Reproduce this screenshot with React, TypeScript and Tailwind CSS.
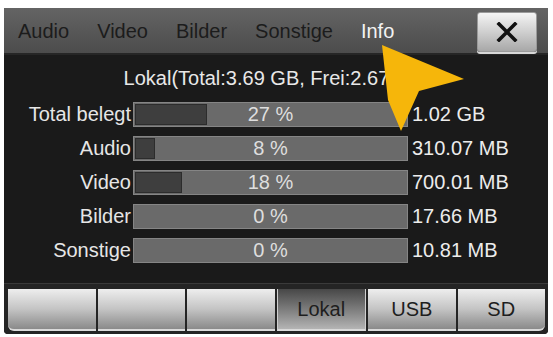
import React from 'react';

const tabs = ['Audio', 'Video', 'Bilder', 'Sonstige', 'Info'];

const rows = [
  { label: 'Total belegt', pct: 27, value: '1.02 GB' },
  { label: 'Audio', pct: 8, value: '310.07 MB' },
  { label: 'Video', pct: 18, value: '700.01 MB' },
  { label: 'Bilder', pct: 0, value: '17.66 MB' },
  { label: 'Sonstige', pct: 0, value: '10.81 MB' },
];

const sources = ['', '', '', 'Lokal', 'USB', 'SD'];

const App: React.FC = () => {
  return (
    <div className="relative w-[553px] h-[337px] bg-white pt-[8px] pl-[4px] font-['Liberation_Sans',Arial,sans-serif] text-[20px] leading-[23px]">
      <div className="w-[544px] h-[326px] bg-[#1a1a1a] flex flex-col rounded-b-[4px] overflow-hidden">
        {/* tab bar */}
        <div className="h-[47px] flex items-center justify-between pl-[14px] pr-[11px] bg-gradient-to-b from-[#646464] to-[#4c4c4c] border-b-2 border-[#262626]">
          <div className="flex items-center gap-[28px] pt-[2px]">
            {tabs.map((t) => (
              <span key={t} className={t === 'Info' ? 'text-[#f2f2f2]' : 'text-[#1c1c1c]'}>
                {t}
              </span>
            ))}
          </div>
          <button className="w-[60px] h-[40px] mt-[2px] rounded-[3px] border border-[#9a9a9a] bg-gradient-to-b from-[#f4f4f4] via-[#cfcfcf] to-[#a8a8a8] flex items-center justify-center shadow-[0_2px_0_#d8d8d8]">
            <svg width="22" height="20" viewBox="0 0 22 20">
              <path d="M3 2 L19 18 M19 2 L3 18" stroke="#111" strokeWidth="3.6" strokeLinecap="square" />
            </svg>
          </button>
        </div>

        {/* storage info */}
        <div className="h-[228px] flex flex-col pt-[12px]">
          <div className="text-center text-[#e8e8e8] pl-[2px]">Lokal(Total:3.69 GB, Frei:2.67 GB)</div>
          <div className="flex flex-col gap-[9px] mt-[12px]">
            {rows.map((r) => (
              <div key={r.label} className="flex items-center h-[25px]">
                <div className="w-[127px] text-right text-[#e6e6e6]">{r.label}</div>
                <div className="relative ml-[2px] w-[275px] h-[25px] bg-[#6a6a6a] border border-[#858585]">
                  {r.pct > 0 && (
                    <div
                      className="absolute left-[1px] top-[1px] bottom-[1px] bg-[#3e3e3e] border border-[#2c2c2c]"
                      style={{ width: `${(r.pct / 100) * 273 - 2}px` }}
                    />
                  )}
                  <div className="absolute inset-0 flex items-center justify-center text-[#dedede]">
                    {r.pct} %
                  </div>
                </div>
                <div className="ml-[4px] text-[#ececec]">{r.value}</div>
              </div>
            ))}
          </div>
        </div>

        {/* source buttons */}
        <div className="flex-1 bg-[#242424] border-t border-[#3a3a3a] flex gap-[2px] pl-[4px] pr-[3px] pt-[5px]">
          {sources.map((s, i) => (
            <div
              key={i}
              className={`flex-1 h-[42px] flex items-center justify-center text-[#1e1e1e] border-b-2 border-[#dadada] ${
                s === 'Lokal'
                  ? 'bg-gradient-to-b from-[#484848] via-[#7c7c7c] to-[#b4b4b4] border-x border-x-[#cfcfcf]'
                  : 'bg-gradient-to-b from-[#eeeeee] via-[#c4c4c4] to-[#8a8a8a]'
              } ${i === 0 ? 'rounded-bl-[6px]' : ''} ${i === 5 ? 'rounded-br-[6px]' : ''}`}
            >
              {s}
            </div>
          ))}
        </div>
      </div>

      {/* pointer arrow */}
      <svg className="absolute left-0 top-0" width="553" height="337" viewBox="0 0 553 337">
        <polygon points="382,45 464,79 419,91 401,131 388,100" fill="#f6b60a" />
      </svg>
    </div>
  );
};

export default App;
